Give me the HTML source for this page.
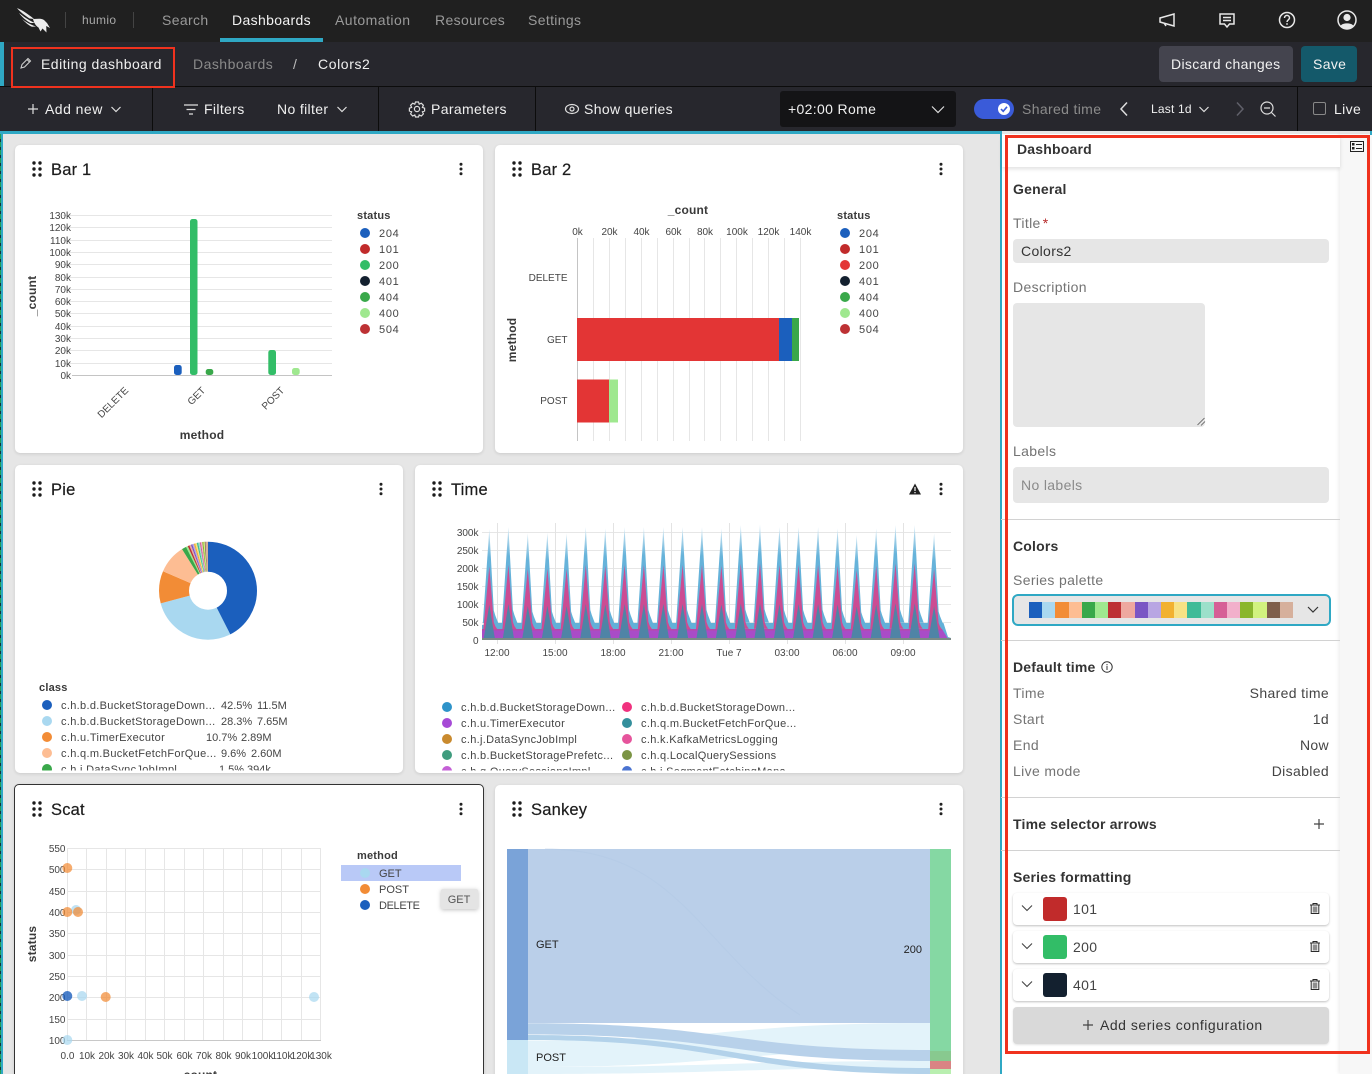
<!DOCTYPE html>
<html lang="en">
<head>
<meta charset="utf-8">
<title>Colors2 - Editing dashboard</title>
<style>
html,body{margin:0;padding:0;width:1372px;height:1074px;overflow:hidden;background:#e6e6e6;font-family:"Liberation Sans",sans-serif;}
*{box-sizing:border-box}
#w{position:absolute;left:0;top:0;width:1372px;height:1074px;overflow:hidden;background:#e6e6e6}
.a{position:absolute}
.t{position:absolute;white-space:nowrap;line-height:16px;height:16px;font-size:14px;letter-spacing:.35px}
.nav{color:#9a9a9a}
.bar{color:#f0f0f0}
.wd{letter-spacing:.47px}
.panel{position:absolute;background:#fff;border-radius:5px;box-shadow:0 1px 3px rgba(0,0,0,.12)}
.ti{font-size:16.5px;color:#1c1c1c;letter-spacing:.2px;line-height:20px;height:20px;-webkit-text-stroke:.2px #1c1c1c}
.g{color:#737373}
.b{font-weight:bold;color:#333;letter-spacing:.2px}
.d{position:absolute;left:1001px;width:339px;height:1px;background:#d2d2d2}
.inp{position:absolute;background:#e6e6e6;border-radius:4px}
.row{position:absolute;left:1013px;width:316px;height:32px;background:#fff;border-radius:4px;box-shadow:0 1px 2px rgba(0,0,0,.25)}
.sw{position:absolute;left:1043px;width:24px;height:24px;border-radius:3px}
.r{text-align:right;color:#444}
svg{position:absolute;left:0;top:0}
svg text{font-family:"Liberation Sans",sans-serif}
.k{font-size:10px;fill:#444}
.l{font-size:11px;fill:#444;letter-spacing:.32px}
.m{font-size:11px;fill:#444;letter-spacing:.7px}
.p{font-size:11px;fill:#444}
.h{font-size:11px;font-weight:bold;fill:#3a3a3a;letter-spacing:.2px}
.h2{font-size:12px;font-weight:bold;fill:#3a3a3a;letter-spacing:.2px}
</style>
</head>
<body>
<div id="w">
<!-- top nav -->
<div class="a" style="left:0;top:0;width:1372px;height:42px;background:#202020"></div>
<div class="a" style="left:0;top:42px;width:1372px;height:44px;background:#27272d"></div>
<div class="a" style="left:0;top:86px;width:1372px;height:1px;background:#0c0c0c"></div>
<div class="a" style="left:0;top:87px;width:1372px;height:44px;background:#27272d"></div>
<div class="a" style="left:0;top:42px;width:4px;height:44px;background:#2fa8c4"></div>
<div class="a" style="left:220px;top:38px;width:103px;height:4px;background:#2fa8c4"></div>
<div class="a" style="left:65px;top:12px;width:1px;height:16px;background:#444"></div>
<div class="a" style="left:133px;top:12px;width:1px;height:16px;background:#444"></div>
<div class="t" style="left:82px;top:12px;font-size:12px;color:#a8a8a8">humio</div>
<div class="t nav" style="left:162px;top:12px">Search</div>
<div class="t" style="left:232px;top:12px;color:#f2f2f2">Dashboards</div>
<div class="t nav wd" style="left:335px;top:12px">Automation</div>
<div class="t nav" style="left:435px;top:12px">Resources</div>
<div class="t nav" style="left:528px;top:12px">Settings</div>

<!-- edit bar -->
<div class="a" style="left:11px;top:47px;width:164px;height:41px;border:2.5px solid #f0321e;z-index:3"></div>
<div class="t bar wd" style="left:41px;top:56px">Editing dashboard</div>
<div class="t wd" style="left:193px;top:56px;color:#8a8a8a">Dashboards</div>
<div class="t" style="left:293px;top:56px;color:#bdbdbd">/</div>
<div class="t" style="left:318px;top:56px;color:#f0f0f0;letter-spacing:.6px">Colors2</div>
<div class="a" style="left:1159px;top:46px;width:134px;height:36px;background:#44444e;border-radius:4px"></div>
<div class="t" style="left:1171px;top:56px;color:#f2f2f2">Discard changes</div>
<div class="a" style="left:1301px;top:46px;width:56px;height:36px;background:#14596a;border-radius:4px"></div>
<div class="t" style="left:1313px;top:56px;color:#f2f2f2">Save</div>

<!-- tool bar -->
<div class="a" style="left:152px;top:87px;width:1px;height:44px;background:#0c0c0c"></div>
<div class="a" style="left:378px;top:87px;width:1px;height:44px;background:#0c0c0c"></div>
<div class="a" style="left:535px;top:87px;width:1px;height:44px;background:#0c0c0c"></div>
<div class="a" style="left:1297px;top:87px;width:1px;height:44px;background:#0c0c0c"></div>
<div class="t bar wd" style="left:45px;top:101px">Add new</div>
<div class="t bar" style="left:204px;top:101px">Filters</div>
<div class="t bar" style="left:277px;top:101px">No filter</div>
<div class="t bar" style="left:431px;top:101px">Parameters</div>
<div class="t bar" style="left:584px;top:101px">Show queries</div>
<div class="a" style="left:780px;top:91px;width:176px;height:36px;background:#141416;border-radius:3px"></div>
<div class="t bar" style="left:788px;top:101px">+02:00 Rome</div>
<div class="a" style="left:974px;top:99px;width:40px;height:20px;background:#3a5bd9;border-radius:10px"></div>
<div class="t" style="left:1022px;top:101px;color:#8c8c8c">Shared time</div>
<div class="t bar" style="left:1151px;top:101px;font-size:12px;letter-spacing:.2px">Last 1d</div>
<div class="a" style="left:1313px;top:102px;width:13px;height:13px;border:1px solid #888;border-radius:2px"></div>
<div class="t bar" style="left:1334px;top:101px">Live</div>

<!-- content background -->
<div class="a" style="left:0;top:131px;width:1001px;height:3px;background:#2fa8c4"></div>
<div class="a" style="left:0;top:131px;width:3px;height:943px;background:#2fa8c4"></div>
<div class="a" style="left:0;top:134px;width:1px;height:940px;background:repeating-linear-gradient(180deg,#1f9d55 0,#1f9d55 5px,#14343a 5px,#14343a 8px)"></div>

<div class="panel" style="left:15px;top:145px;width:468px;height:308px"></div>
<div class="panel" style="left:495px;top:145px;width:468px;height:308px"></div>
<div class="panel" style="left:15px;top:465px;width:388px;height:308px"></div>
<div class="panel" style="left:415px;top:465px;width:548px;height:308px"></div>
<div class="panel" style="left:14px;top:784px;width:470px;height:320px;border:1px solid #333"></div>
<div class="panel" style="left:495px;top:785px;width:468px;height:320px"></div>

<div class="t ti" style="left:51px;top:160px">Bar 1</div>
<div class="t ti" style="left:531px;top:160px">Bar 2</div>
<div class="t ti" style="left:51px;top:480px">Pie</div>
<div class="t ti" style="left:451px;top:480px">Time</div>
<div class="t ti" style="left:51px;top:800px">Scat</div>
<div class="t ti" style="left:531px;top:800px">Sankey</div>

<!-- right panel -->
<div class="a" style="left:1000px;top:131px;width:2px;height:943px;background:#2fa8c4"></div>
<div class="a" style="left:1002px;top:134px;width:338px;height:940px;background:#fff"></div>
<div class="a" style="left:1340px;top:134px;width:32px;height:940px;background:#f7f7f7;box-shadow:-2px 0 3px rgba(0,0,0,.06)"></div>
<div class="a" style="left:1002px;top:136px;width:338px;height:31px;background:#fff;box-shadow:0 2px 4px rgba(0,0,0,.12)"></div>
<div class="a" style="left:1370px;top:131px;width:2px;height:4px;background:#2fa8c4"></div>
<div class="t b" style="left:1017px;top:141px">Dashboard</div>
<div class="t b" style="left:1013px;top:181px">General</div>
<div class="t g" style="left:1013px;top:215px">Title<span style="color:#b52a2a;margin-left:2px">*</span></div>
<div class="inp" style="left:1013px;top:239px;width:316px;height:24px"></div>
<div class="t" style="left:1021px;top:243px;color:#333">Colors2</div>
<div class="t g" style="left:1013px;top:279px">Description</div>
<div class="inp" style="left:1013px;top:303px;width:192px;height:124px"></div>
<div class="t g" style="left:1013px;top:443px">Labels</div>
<div class="inp" style="left:1013px;top:467px;width:316px;height:36px"></div>
<div class="t" style="left:1021px;top:477px;color:#8a8a8a">No labels</div>
<div class="d" style="top:519px"></div>
<div class="t b" style="left:1013px;top:538px">Colors</div>
<div class="t g" style="left:1013px;top:572px">Series palette</div>
<div class="inp" style="left:1012px;top:594px;width:319px;height:32px;border:2px solid #2fa8c4;border-radius:6px"></div>
<div class="a" style="left:1029px;top:602px;width:264px;height:16px;display:flex">
<i style="flex:1;background:#1b5fbd"></i><i style="flex:1;background:#a9d8f0"></i><i style="flex:1;background:#f28c36"></i><i style="flex:1;background:#fdbd93"></i><i style="flex:1;background:#39a84a"></i><i style="flex:1;background:#9fe88f"></i><i style="flex:1;background:#bd3134"></i><i style="flex:1;background:#eea89f"></i><i style="flex:1;background:#7a56c4"></i><i style="flex:1;background:#b8a6e3"></i><i style="flex:1;background:#f2b130"></i><i style="flex:1;background:#f7e285"></i><i style="flex:1;background:#40bb98"></i><i style="flex:1;background:#9ce0ca"></i><i style="flex:1;background:#d65f96"></i><i style="flex:1;background:#f2b0cb"></i><i style="flex:1;background:#8ab62d"></i><i style="flex:1;background:#d2f27f"></i><i style="flex:1;background:#7f5f4c"></i><i style="flex:1;background:#d6b09c"></i>
</div>
<div class="d" style="top:640px"></div>
<div class="t b" style="left:1013px;top:659px">Default time</div>
<div class="t g" style="left:1013px;top:685px">Time</div>
<div class="t g" style="left:1013px;top:711px">Start</div>
<div class="t g" style="left:1013px;top:737px">End</div>
<div class="t g" style="left:1013px;top:763px">Live mode</div>
<div class="t r" style="left:1129px;width:200px;top:685px">Shared time</div>
<div class="t r" style="left:1129px;width:200px;top:711px">1d</div>
<div class="t r" style="left:1129px;width:200px;top:737px">Now</div>
<div class="t r" style="left:1129px;width:200px;top:763px">Disabled</div>
<div class="d" style="top:797px"></div>
<div class="t b" style="left:1013px;top:816px">Time selector arrows</div>
<div class="d" style="top:850px"></div>
<div class="t b" style="left:1013px;top:869px">Series formatting</div>
<div class="row" style="top:893px"></div>
<div class="row" style="top:931px"></div>
<div class="row" style="top:969px"></div>
<div class="sw" style="top:897px;background:#c12b2b"></div>
<div class="sw" style="top:935px;background:#32bd67"></div>
<div class="sw" style="top:973px;background:#13202f"></div>
<div class="t" style="left:1073px;top:901px;color:#444">101</div>
<div class="t" style="left:1073px;top:939px;color:#444">200</div>
<div class="t" style="left:1073px;top:977px;color:#444">401</div>
<div class="a" style="left:1013px;top:1007px;width:316px;height:37px;background:#d9d9d9;border-radius:4px;box-shadow:0 1px 2px rgba(0,0,0,.12)"></div>
<div class="t" style="left:1100px;top:1017px;color:#333;letter-spacing:.52px">Add series configuration</div>
<div class="a" style="left:1005px;top:135px;width:365px;height:919px;border:3px solid #f0321e;z-index:3"></div>

<svg width="1372" height="1074" viewBox="0 0 1372 1074" xmlns="http://www.w3.org/2000/svg">
<defs>
<linearGradient id="bl" x1="0" y1="0" x2="0" y2="1"><stop offset="0" stop-color="#d5e9f4"/><stop offset=".3" stop-color="#66b3da"/><stop offset="1" stop-color="#62b0d8"/></linearGradient>
<g id="s">
<path d="M-6.5 -17L0 -113L4.5 -30L6 -25L9 -17Z" fill="url(#bl)"/>
<path d="M-6 -11L0 -75L4.5 -18L6 -14L8 -11Z" fill="#cc4c93"/>
<path d="M-5.5 -2L0 -36L5.5 -2Z" fill="#4f84a6"/>
</g>
<g id="dr" fill="#1c1c1c"><circle cx="0" cy="0" r="1.7"/><circle cx="6" cy="0" r="1.7"/><circle cx="0" cy="6" r="1.7"/><circle cx="6" cy="6" r="1.7"/><circle cx="0" cy="12" r="1.7"/><circle cx="6" cy="12" r="1.7"/></g>
<g id="kb" fill="#222"><circle cx="0" cy="-4.7" r="1.5"/><circle cx="0" cy="0" r="1.5"/><circle cx="0" cy="4.7" r="1.5"/></g>
<g id="tr" fill="none" stroke="#2a2a2a" stroke-width="1"><path d="M-5 -3.5H5M-2 -3.5V-5H2V-3.5M-3.8 -3.5V5H3.8V-3.5"/><rect x="-2.3" y="-2" width="4.6" height="6" fill="#8f8f8f" stroke="none"/></g>
<clipPath id="cp"><rect x="15" y="465" width="388" height="305.5"/></clipPath>
<clipPath id="ct"><rect x="415" y="465" width="548" height="305.5"/></clipPath>
</defs>

<!-- logo -->
<g fill="#ececec">
<path d="M17 8C22 10 28 14 34 19L29.5 18.5C25 15.5 20 12 17 8Z"/>
<path d="M19 13C23 16 28 20 35 23L30.5 23C26 20.5 22 17 19 13Z"/>
<path d="M22 19C26 22 30 24.5 36 26.5L32 26.8C28 25 25 22 22 19Z"/>
<path d="M33 19C37 19 41 18 44 20L47 23L50 28L46.2 26L46.5 32.5L42.5 28.5L40.5 31.5L38.5 27.5C36 26 34 23 33 19Z"/>
</g>
<g fill="none" stroke="#e8e8e8" stroke-width="1.5">
<path d="M1160 18L1174 14V26L1160 22ZM1164 23L1166 26"/>
<path d="M1220 14H1234V24H1229.5L1227 27L1224.5 24H1220ZM1223 17.5H1231M1223 20.5H1231"/>
<circle cx="1287" cy="20" r="7.5"/>
<path d="M1284.5 18C1284.5 14.5 1289.5 14.5 1289.5 18C1289.5 19.8 1287 19.8 1287 22"/>
<circle cx="1347" cy="20" r="9"/>
</g>
<circle cx="1287" cy="24" r=".9" fill="#e8e8e8"/>
<circle cx="1347" cy="17.5" r="3.6" fill="#e8e8e8"/><path d="M1340.5 26C1342 22.5 1352 22.5 1353.5 26C1350 29.5 1344 29.5 1340.5 26Z" fill="#e8e8e8"/>

<!-- bar icons -->
<g fill="none" stroke="#cfcfcf" stroke-width="1.1">
<path d="M21 68L22 64.5L28 58.5L30.5 61L24.5 67ZM27 59.5L29.5 62"/>
</g>
<g fill="none" stroke="#dedede" stroke-width="1.2">
<path d="M28 109H38M33 104V114"/>
<path d="M111.5 107L116 111.5L120.5 107"/>
<path d="M184 105H198M186.5 109.5H195.5M189 114H193"/>
<path d="M337.5 107L342 111.5L346.5 107"/>
<circle cx="417" cy="109" r="2.6"/>
<path d="M415.5 102H418.5L419.2 104.2L421.3 103.2L423.4 105.3L422.4 107.4L424.6 108.2V111L422.4 111.8L423.4 113.9L421.3 116L419.2 115L418.5 117H415.5L414.8 115L412.7 116L410.6 113.9L411.6 111.8L409.4 111V108.2L411.6 107.4L410.6 105.3L412.7 103.2L414.8 104.2Z"/>
<ellipse cx="572" cy="109" rx="6.5" ry="4.5"/><circle cx="572" cy="109" r="2"/>
<path d="M932 106.5L938 112.5L944 106.5"/>
<path d="M1127 102.5L1121 109L1127 115.5" stroke-width="1.5"/>
<path d="M1199.5 107L1204 111.5L1208.5 107"/>
<circle cx="1267" cy="108" r="6"/><path d="M1264 108H1270M1271.5 112.5L1275.5 116.5"/>
</g>
<path d="M1237 102.5L1243 109L1237 115.5" fill="none" stroke="#60606a" stroke-width="1.5"/>
<circle cx="1004" cy="109" r="6" fill="#fff"/><path d="M1001 109L1003.2 111.3L1007 106.8" fill="none" stroke="#3a5bd9" stroke-width="1.6"/>

<!-- drag + kebab -->
<use href="#dr" x="34" y="163"/><use href="#dr" x="514" y="163"/><use href="#dr" x="34" y="483"/><use href="#dr" x="434" y="483"/><use href="#dr" x="34" y="803"/><use href="#dr" x="514" y="803"/>
<use href="#kb" x="461" y="169"/><use href="#kb" x="941" y="169"/><use href="#kb" x="381" y="489"/><use href="#kb" x="941" y="489"/><use href="#kb" x="461" y="809"/><use href="#kb" x="941" y="809"/>
<path d="M915 483.5L921 494.5H909Z" fill="#222"/><path d="M915 487V491M915 492V493.3" stroke="#fff" stroke-width="1.2"/>

<!-- BAR 1 -->
<path d="M63 215.5H332M63 227.5H332M63 240.5H332M63 252.5H332M63 264.5H332M63 277.5H332M63 289.5H332M63 301.5H332M63 313.5H332M63 326.5H332M63 338.5H332M63 350.5H332M63 363.5H332" stroke="#e6e6e6"/>
<path d="M72 375.5H332" stroke="#c4c4c4"/>
<g class="k" text-anchor="end"><text x="71" y="219" class="k">130k</text><text x="71" y="231" class="k">120k</text><text x="71" y="244" class="k">110k</text><text x="71" y="256" class="k">100k</text><text x="71" y="268" class="k">90k</text><text x="71" y="281" class="k">80k</text><text x="71" y="293" class="k">70k</text><text x="71" y="305" class="k">60k</text><text x="71" y="317" class="k">50k</text><text x="71" y="330" class="k">40k</text><text x="71" y="342" class="k">30k</text><text x="71" y="354" class="k">20k</text><text x="71" y="367" class="k">10k</text><text x="71" y="379" class="k">0k</text></g>
<rect x="174" y="365" width="7.7" height="10" rx="2.5" fill="#1b5fbd"/>
<rect x="190" y="219" width="7.5" height="156" rx="2.5" fill="#32bd67"/>
<rect x="205.7" y="369" width="7.6" height="6" rx="2.5" fill="#39a84a"/>
<rect x="268.3" y="350" width="7.7" height="25" rx="2.5" fill="#32bd67"/>
<rect x="292" y="368" width="7.7" height="7" rx="2.5" fill="#9fe88f"/>
<text class="k" text-anchor="end" transform="translate(129,391) rotate(-45)">DELETE</text>
<text class="k" text-anchor="end" transform="translate(206,391) rotate(-45)">GET</text>
<text class="k" text-anchor="end" transform="translate(285,391) rotate(-45)">POST</text>
<text class="h2" x="202" y="439" text-anchor="middle">method</text>
<text class="h2" text-anchor="middle" transform="translate(36,296) rotate(-90)">_count</text>
<text class="h" x="357" y="219">status</text>
<circle cx="365" cy="233" r="5" fill="#1b5fbd"/><circle cx="365" cy="249" r="5" fill="#c12b2b"/><circle cx="365" cy="265" r="5" fill="#32bd67"/><circle cx="365" cy="281" r="5" fill="#13202f"/><circle cx="365" cy="297" r="5" fill="#39a84a"/><circle cx="365" cy="313" r="5" fill="#9fe88f"/><circle cx="365" cy="329" r="5" fill="#bd3134"/>
<text class="m" x="379" y="237">204</text><text class="m" x="379" y="253">101</text><text class="m" x="379" y="269">200</text><text class="m" x="379" y="285">401</text><text class="m" x="379" y="301">404</text><text class="m" x="379" y="317">400</text><text class="m" x="379" y="333">504</text>

<!-- BAR 2 -->
<path d="M593.5 238V441M609.5 238V441M625.5 238V441M641.5 238V441M657.5 238V441M673.5 238V441M689.5 238V441M704.5 238V441M720.5 238V441M736.5 238V441M752.5 238V441M768.5 238V441M784.5 238V441M800.5 238V441" stroke="#e6e6e6"/>
<path d="M577.5 238V441" stroke="#c4c4c4"/>
<g text-anchor="middle"><text class="k" x="577.5" y="235">0k</text><text class="k" x="609.5" y="235">20k</text><text class="k" x="641.5" y="235">40k</text><text class="k" x="673.5" y="235">60k</text><text class="k" x="705" y="235">80k</text><text class="k" x="737" y="235">100k</text><text class="k" x="768.5" y="235">120k</text><text class="k" x="800.5" y="235">140k</text></g>
<text class="h2" x="688" y="214" text-anchor="middle">_count</text>
<g text-anchor="end"><text class="k" x="567.5" y="281">DELETE</text><text class="k" x="567.5" y="343">GET</text><text class="k" x="567.5" y="404">POST</text></g>
<text class="h2" text-anchor="middle" transform="translate(516,340) rotate(-90)">method</text>
<rect x="577" y="318" width="202" height="43" fill="#e33535"/><rect x="779" y="318" width="13" height="43" fill="#1b5fbd"/><rect x="792" y="318" width="7" height="43" fill="#39a84a"/>
<rect x="577" y="379.5" width="32" height="43" fill="#e33535"/><rect x="609" y="379.5" width="9" height="43" fill="#9fe88f"/>
<text class="h" x="837" y="219">status</text>
<circle cx="845" cy="233" r="5" fill="#1b5fbd"/><circle cx="845" cy="249" r="5" fill="#c12b2b"/><circle cx="845" cy="265" r="5" fill="#e33535"/><circle cx="845" cy="281" r="5" fill="#13202f"/><circle cx="845" cy="297" r="5" fill="#39a84a"/><circle cx="845" cy="313" r="5" fill="#9fe88f"/><circle cx="845" cy="329" r="5" fill="#bd3134"/>
<text class="m" x="859" y="237">204</text><text class="m" x="859" y="253">101</text><text class="m" x="859" y="269">200</text><text class="m" x="859" y="285">401</text><text class="m" x="859" y="301">404</text><text class="m" x="859" y="317">400</text><text class="m" x="859" y="333">504</text>

<!-- PIE -->
<g transform="rotate(-90 208 590.7)" fill="none" stroke-width="30">
<circle cx="208" cy="590.7" r="34" pathLength="100" stroke="#1b5fbd" stroke-dasharray="42.5 100" stroke-dashoffset="0"/>
<circle cx="208" cy="590.7" r="34" pathLength="100" stroke="#a9d8f0" stroke-dasharray="28.3 100" stroke-dashoffset="-42.5"/>
<circle cx="208" cy="590.7" r="34" pathLength="100" stroke="#f28c36" stroke-dasharray="10.7 100" stroke-dashoffset="-70.8"/>
<circle cx="208" cy="590.7" r="34" pathLength="100" stroke="#fdbd93" stroke-dasharray="9.6 100" stroke-dashoffset="-81.5"/>
<circle cx="208" cy="590.7" r="34" pathLength="100" stroke="#39a84a" stroke-dasharray="1.5 100" stroke-dashoffset="-91.1"/>
<circle cx="208" cy="590.7" r="34" pathLength="100" stroke="#9fe88f" stroke-dasharray=".6 100" stroke-dashoffset="-92.6"/>
<circle cx="208" cy="590.7" r="34" pathLength="100" stroke="#bd3134" stroke-dasharray=".6 100" stroke-dashoffset="-93.2"/>
<circle cx="208" cy="590.7" r="34" pathLength="100" stroke="#eea89f" stroke-dasharray=".5 100" stroke-dashoffset="-93.8"/>
<circle cx="208" cy="590.7" r="34" pathLength="100" stroke="#7a56c4" stroke-dasharray=".5 100" stroke-dashoffset="-94.3"/>
<circle cx="208" cy="590.7" r="34" pathLength="100" stroke="#b8a6e3" stroke-dasharray=".5 100" stroke-dashoffset="-94.8"/>
<circle cx="208" cy="590.7" r="34" pathLength="100" stroke="#f2b130" stroke-dasharray=".5 100" stroke-dashoffset="-95.3"/>
<circle cx="208" cy="590.7" r="34" pathLength="100" stroke="#f7e285" stroke-dasharray=".5 100" stroke-dashoffset="-95.8"/>
<circle cx="208" cy="590.7" r="34" pathLength="100" stroke="#40bb98" stroke-dasharray=".5 100" stroke-dashoffset="-96.3"/>
<circle cx="208" cy="590.7" r="34" pathLength="100" stroke="#9ce0ca" stroke-dasharray=".5 100" stroke-dashoffset="-96.8"/>
<circle cx="208" cy="590.7" r="34" pathLength="100" stroke="#d65f96" stroke-dasharray=".4 100" stroke-dashoffset="-97.3"/>
<circle cx="208" cy="590.7" r="34" pathLength="100" stroke="#f2b0cb" stroke-dasharray=".4 100" stroke-dashoffset="-97.7"/>
<circle cx="208" cy="590.7" r="34" pathLength="100" stroke="#8ab62d" stroke-dasharray=".4 100" stroke-dashoffset="-98.1"/>
<circle cx="208" cy="590.7" r="34" pathLength="100" stroke="#d2f27f" stroke-dasharray=".4 100" stroke-dashoffset="-98.5"/>
<circle cx="208" cy="590.7" r="34" pathLength="100" stroke="#7f5f4c" stroke-dasharray=".3 100" stroke-dashoffset="-98.9"/>
<circle cx="208" cy="590.7" r="34" pathLength="100" stroke="#d6b09c" stroke-dasharray=".8 100" stroke-dashoffset="-99.2"/>
</g>
<text class="h" x="39" y="691">class</text>
<g clip-path="url(#cp)">
<circle cx="47" cy="705" r="5" fill="#1b5fbd"/><circle cx="47" cy="721" r="5" fill="#a9d8f0"/><circle cx="47" cy="737" r="5" fill="#f28c36"/><circle cx="47" cy="753" r="5" fill="#fdbd93"/><circle cx="47" cy="769" r="5" fill="#39a84a"/>
<text class="l" x="61" y="709">c.h.b.d.BucketStorageDown...</text><text class="p" x="221" y="709">42.5%</text><text class="p" x="257" y="709">11.5M</text>
<text class="l" x="61" y="725">c.h.b.d.BucketStorageDown...</text><text class="p" x="221" y="725">28.3%</text><text class="p" x="257" y="725">7.65M</text>
<text class="l" x="61" y="741">c.h.u.TimerExecutor</text><text class="p" x="206" y="741">10.7%</text><text class="p" x="241" y="741">2.89M</text>
<text class="l" x="61" y="757">c.h.q.m.BucketFetchForQue...</text><text class="p" x="221" y="757">9.6%</text><text class="p" x="251" y="757">2.60M</text>
<text class="l" x="61" y="773">c.h.j.DataSyncJobImpl</text><text class="p" x="219" y="773">1.5%</text><text class="p" x="247" y="773">394k</text>
</g>

<!-- TIME -->
<path d="M482 532.5H951M482 550.5H951M482 568.5H951M482 586.5H951M482 604.5H951M482 622.5H951" stroke="#e6e6e6"/>
<path d="M497.5 523V644M555.5 523V644M613.5 523V644M671.5 523V644M729.5 523V644M787.5 523V644M845.5 523V644M903.5 523V644" stroke="#e3e3e3"/>
<path d="M482 625L490 623H943.5L948 637L951 638V640H482Z" fill="#62b0d8"/>
<path d="M482 629H942L947.5 638L951 638.5V640H482Z" fill="#a94cc7"/>
<path d="M482 629H942V630.5H482Z" fill="#b64aa8"/>
<use href="#s" transform="matrix(1 0 0 .982 489.3 640)"/>
<use href="#s" transform="matrix(1 0 0 1 508.4 640)"/>
<use href="#s" transform="matrix(1 0 0 .945 527.8 640)"/>
<use href="#s" transform="matrix(1 0 0 .95 547.4 640)"/>
<use href="#s" transform="matrix(1 0 0 .945 566.6 640)"/>
<use href="#s" transform="matrix(1 0 0 1 585.8 640)"/>
<use href="#s" transform="matrix(1 0 0 .988 605.3 640)"/>
<use href="#s" transform="matrix(1 0 0 1 624.6 640)"/>
<use href="#s" transform="matrix(1 0 0 1 643.9 640)"/>
<use href="#s" transform="matrix(1 0 0 1 663.4 640)"/>
<use href="#s" transform="matrix(1 0 0 1 682.6 640)"/>
<use href="#s" transform="matrix(1 0 0 1 702 640)"/>
<use href="#s" transform="matrix(1 0 0 .988 721.4 640)"/>
<use href="#s" transform="matrix(1 0 0 1.018 740.8 640)"/>
<use href="#s" transform="matrix(1 0 0 1.024 760 640)"/>
<use href="#s" transform="matrix(1 0 0 1 779.5 640)"/>
<use href="#s" transform="matrix(1 0 0 1 798.6 640)"/>
<use href="#s" transform="matrix(1 0 0 1 818.1 640)"/>
<use href="#s" transform="matrix(1 0 0 .988 837.6 640)"/>
<use href="#s" transform="matrix(1 0 0 .93 856.7 640)"/>
<use href="#s" transform="matrix(1 0 0 .988 876.2 640)"/>
<use href="#s" transform="matrix(1 0 0 1.018 895.5 640)"/>
<use href="#s" transform="matrix(1 0 0 1.018 914.7 640)"/>
<use href="#s" transform="matrix(1 0 0 .945 934.1 640)"/>
<rect x="482" y="638" width="469" height="2" fill="#7c8a86"/>
<g text-anchor="end"><text class="k" x="478.5" y="536">300k</text><text class="k" x="478.5" y="554">250k</text><text class="k" x="478.5" y="572">200k</text><text class="k" x="478.5" y="590">150k</text><text class="k" x="478.5" y="608">100k</text><text class="k" x="478.5" y="626">50k</text><text class="k" x="478.5" y="644">0</text></g>
<g text-anchor="middle"><text class="k" x="497" y="656">12:00</text><text class="k" x="555" y="656">15:00</text><text class="k" x="613" y="656">18:00</text><text class="k" x="671" y="656">21:00</text><text class="k" x="729" y="656">Tue 7</text><text class="k" x="787" y="656">03:00</text><text class="k" x="845" y="656">06:00</text><text class="k" x="903" y="656">09:00</text></g>
<g clip-path="url(#ct)">
<circle cx="447" cy="707" r="5" fill="#2e93c9"/><circle cx="447" cy="723" r="5" fill="#a64ad6"/><circle cx="447" cy="739" r="5" fill="#c98a2e"/><circle cx="447" cy="755" r="5" fill="#3f9c7e"/><circle cx="447" cy="771" r="5" fill="#c45fd6"/>
<circle cx="627" cy="707" r="5" fill="#f0317e"/><circle cx="627" cy="723" r="5" fill="#348f9c"/><circle cx="627" cy="739" r="5" fill="#e6549c"/><circle cx="627" cy="755" r="5" fill="#7b9444"/><circle cx="627" cy="771" r="5" fill="#4a73d1"/>
<text class="l" x="461" y="711">c.h.b.d.BucketStorageDown...</text><text class="l" x="461" y="727">c.h.u.TimerExecutor</text><text class="l" x="461" y="743">c.h.j.DataSyncJobImpl</text><text class="l" x="461" y="759">c.h.b.BucketStoragePrefetc...</text><text class="l" x="461" y="775">c.h.q.QuerySessionsImpl</text>
<text class="l" x="641" y="711">c.h.b.d.BucketStorageDown...</text><text class="l" x="641" y="727">c.h.q.m.BucketFetchForQue...</text><text class="l" x="641" y="743">c.h.k.KafkaMetricsLogging</text><text class="l" x="641" y="759">c.h.q.LocalQuerySessions</text><text class="l" x="641" y="775">c.h.j.SegmentFetchingMana...</text>
</g>

<!-- SCAT -->
<path d="M67.5 848V1040M86.5 848V1040M106.5 848V1040M125.5 848V1040M145.5 848V1040M164.5 848V1040M184.5 848V1040M203.5 848V1040M223.5 848V1040M242.5 848V1040M262.5 848V1040M281.5 848V1040M301.5 848V1040M320.5 848V1040" stroke="#e6e6e6"/>
<path d="M67 848.5H321M67 869.5H321M67 891.5H321M67 912.5H321M67 933.5H321M67 955.5H321M67 976.5H321M67 997.5H321M67 1019.5H321" stroke="#e6e6e6"/>
<path d="M67 1040.5H321" stroke="#c8c8c8"/>
<g text-anchor="end"><text class="k" x="65.5" y="852">550</text><text class="k" x="65.5" y="873">500</text><text class="k" x="65.5" y="895">450</text><text class="k" x="65.5" y="916">400</text><text class="k" x="65.5" y="937">350</text><text class="k" x="65.5" y="959">300</text><text class="k" x="65.5" y="980">250</text><text class="k" x="65.5" y="1001">200</text><text class="k" x="65.5" y="1023">150</text><text class="k" x="65.5" y="1044">100</text></g>
<g text-anchor="middle"><text class="k" x="67.5" y="1059">0.0</text><text class="k" x="87" y="1059">10k</text><text class="k" x="106.5" y="1059">20k</text><text class="k" x="126" y="1059">30k</text><text class="k" x="145.5" y="1059">40k</text><text class="k" x="164.5" y="1059">50k</text><text class="k" x="184.5" y="1059">60k</text><text class="k" x="204" y="1059">70k</text><text class="k" x="223.5" y="1059">80k</text><text class="k" x="243" y="1059">90k</text><text class="k" x="262.5" y="1059">100k</text><text class="k" x="282" y="1059">110k</text><text class="k" x="301.5" y="1059">120k</text><text class="k" x="321" y="1059">130k</text></g>
<text class="h2" x="197" y="1079" text-anchor="middle">_count</text>
<text class="h2" text-anchor="middle" transform="translate(36,944) rotate(-90)">status</text>
<g opacity=".72" fill="#a9d8f0"><circle cx="76" cy="910" r="5"/><circle cx="82" cy="996" r="5"/><circle cx="314" cy="997" r="5"/><circle cx="67.3" cy="1040" r="5"/></g>
<g opacity=".72" fill="#f28c36"><circle cx="67.3" cy="868" r="5"/><circle cx="67.3" cy="912" r="5"/><circle cx="78" cy="912" r="5"/><circle cx="105.7" cy="997" r="5"/></g>
<circle cx="67.3" cy="996" r="5" fill="#1b5fbd" opacity=".8"/>
<text class="h" x="357" y="859">method</text>
<rect x="341" y="865" width="120" height="16" fill="#b9c9f7"/>
<circle cx="365" cy="873" r="5" fill="#a9d8f0"/><circle cx="365" cy="889" r="5" fill="#f28c36"/><circle cx="365" cy="905" r="5" fill="#1b5fbd"/>
<text class="p" x="379" y="877">GET</text><text class="p" x="379" y="893">POST</text><text class="p" x="379" y="909" textLength="41">DELETE</text>
<rect x="441" y="889" width="37" height="20" rx="2" fill="#e4e4e4" style="filter:drop-shadow(0 1px 2px rgba(0,0,0,.25))"/>
<text class="p" x="459" y="903" text-anchor="middle" style="fill:#555">GET</text>

<!-- SANKEY -->
<rect x="507" y="849" width="21" height="191" fill="#7aa3d8"/>
<rect x="507" y="1040" width="21" height="34" fill="#c9e7f5"/>
<rect x="528" y="849" width="402" height="174" fill="#bacfe9"/>
<path d="M528 1040.5C729 1040.5 729 1023 930 1023V1050C729 1050 729 1067 528 1067Z" fill="#e3f3fa"/>
<path d="M528 1067C729 1067 729 1061 930 1061V1068C729 1068 729 1074 528 1074Z" fill="#e3f3fa"/>
<path d="M528 1023.3C729 1023.3 729 1050 930 1050V1061C729 1061 729 1034.5 528 1034.5Z" fill="#b8d1ea"/>
<path d="M528 1035C729 1035 729 1068 930 1068V1074C729 1074 729 1040 528 1040Z" fill="#b3d2ea"/>
<path d="M545 849C680 849 700 950 800 1015" fill="none" stroke="#b2c9e5" stroke-width="1" opacity=".5"/>
<rect x="930" y="849" width="21" height="202" fill="#85d8a3"/>
<rect x="930" y="1051" width="21" height="10" fill="#88c98f"/>
<rect x="930" y="1061" width="21" height="8" fill="#d98484"/>
<rect x="930" y="1069" width="21" height="5" fill="#b9efb0"/>
<text class="k" x="536" y="948" style="fill:#222;font-size:11px">GET</text>
<text class="k" x="536" y="1061" style="fill:#222;font-size:11px">POST</text>
<text class="k" x="922" y="953" text-anchor="end" style="fill:#222;font-size:11px">200</text>

<!-- side panel icons -->
<g fill="none" stroke="#222" stroke-width="1">
<rect x="1350.5" y="141.5" width="13" height="10"/>
<path d="M1356 144.5H1362M1356 148.5H1362"/>
</g>
<rect x="1352" y="143" width="2.5" height="2.5" fill="#222"/><rect x="1352" y="147" width="2.5" height="2.5" fill="#222"/>
<path d="M1197 425L1204 418M1200.5 425.5L1204.5 421.5" stroke="#555" stroke-width=".8" transform="translate(.5 0)"/>
<path d="M1308 607L1313 612L1318 607" fill="none" stroke="#333" stroke-width="1.2"/>
<circle cx="1107" cy="667" r="5.2" fill="none" stroke="#333"/><path d="M1107 666V670M1107 664V665.2" stroke="#333"/>
<path d="M1314 824H1324M1319 819V829" stroke="#444" stroke-width="1.2"/>
<path d="M1022 905.5L1027 910.5L1032 905.5M1022 943.5L1027 948.5L1032 943.5M1022 981.5L1027 986.5L1032 981.5" fill="none" stroke="#444" stroke-width="1.1"/>
<use href="#tr" x="1315" y="908.5"/><use href="#tr" x="1315" y="946.5"/><use href="#tr" x="1315" y="984.5"/>
<path d="M1083 1025H1093M1088 1020V1030" stroke="#444" stroke-width="1.2"/>
</svg>
</div>
</body>
</html>
